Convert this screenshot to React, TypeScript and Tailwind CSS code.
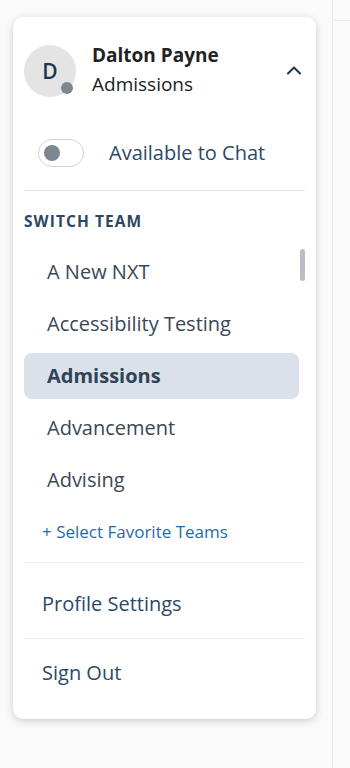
import React from 'react';

const teams = ['A New NXT', 'Accessibility Testing', 'Admissions', 'Advancement', 'Advising'];

export default function App() {
  return (
    <div
      className="relative w-[350px] h-[768px] bg-[#fafafa] overflow-hidden"
      style={{ fontFamily: '"Open Sans", "Liberation Sans", sans-serif' }}
    >
      {/* page edge on the right */}
      <div className="absolute left-[332px] top-0 h-full w-px bg-[#e3e8ef]" />
      <div className="absolute left-[334px] top-[20px] h-px w-[16px] bg-[#e6eaf0]" />

      {/* Menu card */}
      <div className="absolute left-[13px] top-[17px] w-[303px] bg-white rounded-[10px] shadow-[0_2px_8px_rgba(0,0,0,0.18)] px-[11px] pb-[13px]">
        {/* Header */}
        <div className="flex items-center pt-[26px]">
          <div className="relative w-[52px] h-[52px] rounded-full bg-[#e4e4e4] flex items-center justify-center shrink-0">
            <span className="text-[21px] font-semibold text-[#1d3550] leading-none">D</span>
            <span className="absolute left-[37px] top-[37px] w-[12px] h-[12px] rounded-full bg-[#7d8791]" />
          </div>
          <div className="ml-[16px] flex-1 min-w-0 mt-[-2px]">
            <div className="text-[19px] font-bold text-[#222] leading-[29px]">Dalton Payne</div>
            <div className="text-[19px] text-[#222] leading-[29px]">Admissions</div>
          </div>
          <svg width="16" height="10" viewBox="0 0 16 10" className="mr-[3px] mt-[-2px]">
            <path d="M2 8.5 L8 2.5 L14 8.5" fill="none" stroke="#1d3550" strokeWidth="2" strokeLinecap="round" strokeLinejoin="round" />
          </svg>
        </div>

        {/* Availability toggle */}
        <div className="flex items-center mt-[40px] pl-[14px]">
          <div className="w-[46px] h-[28px] rounded-full border border-[#cfd3d8] flex items-center pl-[5px]">
            <span className="w-[16px] h-[16px] rounded-full bg-[#7d8791]" />
          </div>
          <span className="ml-[25px] text-[20px] leading-[28px] text-[#2c4a66]">Available to Chat</span>
        </div>

        <div className="mt-[23px] h-px bg-[#e6e6e6]" />

        {/* Switch team */}
        <div className="mt-[18px] text-[15.5px] leading-[24px] font-bold tracking-[0.07em] text-[#2c4763]">SWITCH TEAM</div>

        <div className="relative mt-[16px]">
          <div className="flex flex-col pr-[6px]">
            {teams.map((t) => (
              <div
                key={t}
                className={`h-[46px] mb-[6px] flex items-center pl-[23px] rounded-[8px] text-[20px] ${
                  t === 'Admissions' ? 'bg-[#dae1ea] font-bold text-[#2f4356]' : 'text-[#3a4858]'
                }`}
              >
                {t}
              </div>
            ))}
          </div>
          {/* scrollbar thumb */}
          <div className="absolute right-[0px] top-[0px] w-[5px] h-[32px] rounded-full bg-[#b8bec6]" />
        </div>

        <div className="mt-[11px] pl-[18px] text-[17px] leading-[24px] text-[#1f6bab]">+ Select Favorite Teams</div>

        <div className="mt-[18px] h-px bg-[#ececec]" />

        <div className="h-[75px] flex items-center pl-[18px] pt-[6px] text-[20px] text-[#2b4966]">Profile Settings</div>

        <div className="h-px bg-[#ececec]" />

        <div className="h-[67px] flex items-center pl-[18px] text-[20px] text-[#2b4966]">Sign Out</div>
      </div>
    </div>
  );
}
